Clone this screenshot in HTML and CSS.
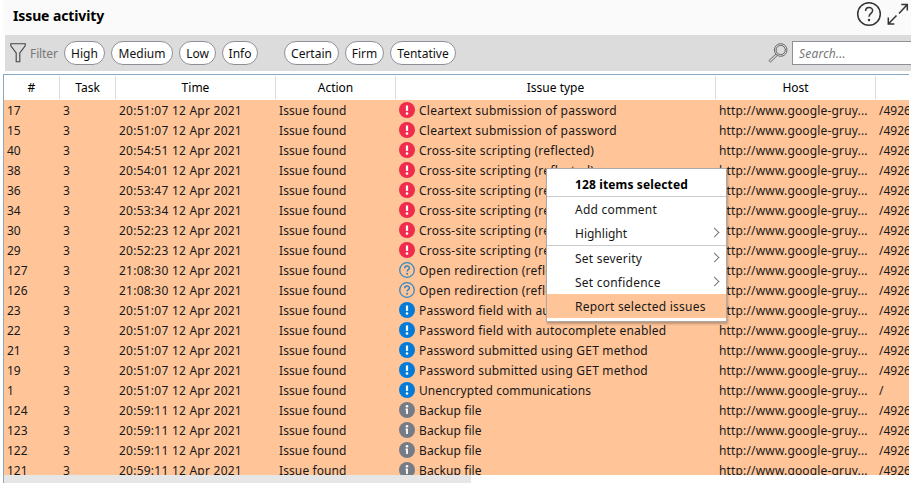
FILE: index.html
```
<!DOCTYPE html>
<html lang="en">
<head>
<meta charset="utf-8">
<title>Issue activity</title>
<link rel="stylesheet" href="styles.css">
</head>
<body>
<svg class="defs" aria-hidden="true">
  <symbol id="high" viewBox="0 0 16 16"><circle cx="8" cy="8" r="8" fill="#f02b4c"/><path d="M8 3.5v5.4" stroke="#fff" stroke-width="2.2"/><circle cx="8" cy="11.5" r="1.3" fill="#fff"/></symbol>
  <symbol id="low" viewBox="0 0 16 16"><circle cx="8" cy="8" r="8" fill="#057bd9"/><path d="M8 3.5v5.4" stroke="#fff" stroke-width="2.2"/><circle cx="8" cy="11.5" r="1.3" fill="#fff"/></symbol>
  <symbol id="tentative" viewBox="0 0 16 16"><circle cx="8" cy="8" r="7.3" fill="none" stroke="#3586c1" stroke-width="1.3"/><path d="M5.7 6.2C5.7 3.2 10.4 3.3 10.4 6c0 1.7-2.3 1.6-2.3 3.5" fill="none" stroke="#3586c1" stroke-width="1.5"/><circle cx="8.1" cy="11.8" r="1" fill="#3586c1"/></symbol>
  <symbol id="info" viewBox="0 0 16 16"><circle cx="8" cy="8" r="8" fill="#757c85"/><circle cx="8" cy="4.3" r="1.3" fill="#fff"/><path d="M6.6 7.3H8V12M8 6.5V12" fill="none" stroke="#fff" stroke-width="1.8"/></symbol>
</svg>
<header class="titlebar">
  <h1>Issue activity</h1>
  <svg class="help" viewBox="0 0 26 26"><circle cx="13" cy="13" r="11.3"/><path d="M9.6 10c0-4.5 7-4.5 7-.5 0 2.9-3.6 3-3.6 6.2"/><circle class="dot" cx="13" cy="19" r="1.2"/></svg>
  <svg class="expand" viewBox="0 0 22 22"><path d="M12 10.5L20.3 1.5M14.3 1.5h6v6M9.5 12.5L1.3 21M1.3 14.6V21h6"/></svg>
</header>
<div class="toolbar">
  <svg class="funnel" viewBox="0 0 16 20"><path d="M.8.8h14.4v2L9.8 10v8.8H6.2V10L.8 2.8z"/></svg>
  <span class="filter">Filter</span>
  <button class="w41">High</button><button class="w62">Medium</button><button class="w37">Low</button><button class="w36">Info</button>
  <button class="w55 second">Certain</button><button class="w39">Firm</button><button class="w66">Tentative</button>
  <svg class="lens" viewBox="0 0 20 20"><circle cx="12.7" cy="7" r="6.3"/><circle cx="12.7" cy="7" r="4.6"/><path d="M8.2 10.8L1 17.5l1.5 1.6 7.2-7"/></svg>
  <div class="search">Search...</div>
</div>
<main class="table">
  <div class="row head"><span>#</span><span>Task</span><span>Time</span><span>Action</span><span>Issue type</span><span>Host</span><span></span></div>
  <div id="rows" class="rows"></div>
  <div class="scroll"><div class="thumb"></div></div>
</main>
<div class="menu">
  <div class="item title">128 items selected</div>
  <div class="group"><div class="item">Add comment</div><div class="item more tight">Highlight</div></div>
  <div class="group"><div class="item more">Set severity</div><div class="item more">Set confidence</div><div class="item active">Report selected issues</div></div>
</div>
<script src="script.js"></script>
</body>
</html>
```
FILE: script.js
```
const clear = 'Cleartext submission of password';
const xss = 'Cross-site scripting (reflected)';
const redirect = 'Open redirection (reflected)';
const auto = 'Password field with autocomplete enabled';
const get = 'Password submitted using GET method';
const issues = [
  [17, '20:51:07', 'high', clear], [15, '20:51:07', 'high', clear],
  [40, '20:54:51', 'high', xss], [38, '20:54:01', 'high', xss],
  [36, '20:53:47', 'high', xss], [34, '20:53:34', 'high', xss],
  [30, '20:52:23', 'high', xss], [29, '20:52:23', 'high', xss],
  [127, '21:08:30', 'tentative', redirect], [126, '21:08:30', 'tentative', redirect],
  [23, '20:51:07', 'low', auto], [22, '20:51:07', 'low', auto],
  [21, '20:51:07', 'low', get], [19, '20:51:07', 'low', get],
  [1, '20:51:07', 'low', 'Unencrypted communications'],
  [124, '20:59:11', 'info', 'Backup file'], [123, '20:59:11', 'info', 'Backup file'],
  [122, '20:59:11', 'info', 'Backup file'], [121, '20:59:11', 'info', 'Backup file']
];
const spacing = { [clear]: 'wide', [xss]: 'wide', [redirect]: 'wide', [auto]: 'medium', [get]: 'medium' };
document.getElementById('rows').innerHTML = issues.map(([id, time, icon, type]) =>
  `<div class="row"><span>${id}</span><span>3</span><span class="time">${time} 12 Apr 2021</span><span class="action">Issue found</span>` +
  `<span class="type ${spacing[type] || 'narrow'}"><svg><use href="#${icon}"/></svg>${type}</span><span class="host">http://www.google-gruy...</span>` +
  `<span>${id === 1 ? '/' : '/4926'}</span></div>`).join('');
```
FILE: styles.css
```
* { box-sizing: border-box; }
body { margin: 0; width: 911px; height: 483px; overflow: hidden; background: #fff; color: #181818; font: 12px "Noto Sans", sans-serif; position: relative; }
.defs { position: absolute; width: 0; height: 0; }
.titlebar { height: 35px; margin-left: 3px; background: #fafafa; display: flex; align-items: flex-start; }
h1 { margin: 0; padding: 6px 0 0 10px; font-size: 14px; line-height: 20px; color: #000; flex: 1; letter-spacing: -.12px; }
.help { width: 26px; height: 26px; margin: 1px 5px 0 0; }
.expand { width: 22px; height: 22px; margin: 3px 2px 0 0; }
.help, .expand { fill: none; stroke: #333; stroke-width: 1.5; }
.help .dot { fill: #333; stroke: none; }
.toolbar { height: 36px; margin-left: 5px; background: #dcdcdc; display: flex; align-items: center; padding-left: 5px; }
.funnel { width: 16px; height: 20px; fill: none; stroke: #444; stroke-width: 1.1; }
.filter { width: 34px; margin-left: 4px; color: #777; letter-spacing: -.1px; }
button { height: 24px; padding: 0; margin-right: 6px; border: 1px solid #8f8f98; border-radius: 12px; background: #fff; color: #111; font: 12px/20px "Noto Sans", sans-serif; padding-top: 2px; }
.w41 { width: 41px; } .w62 { width: 62px; } .w37 { width: 37px; } .w36 { width: 36px; } .w55 { width: 55px; } .w39 { width: 39px; } .w66 { width: 66px; }
.second { margin-left: 20px; }
.lens { width: 20px; height: 20px; margin-left: auto; margin-right: 4px; fill: none; stroke: #666; stroke-width: 1; }
.search { width: 119px; height: 24px; border: 1px solid #8f8f98; border-right: 0; background: #fff; color: #777; font-style: italic; line-height: 23px; padding-left: 6px; letter-spacing: .2px; }
.table { width: 906px; height: 409px; margin: 3px 0 0 3px; border: 1px solid #87a9c6; border-right: 0; border-bottom: 0; overflow: hidden; }
.row { display: grid; grid-template-columns: 56px 56px 160px 120px 320px 160px 33px; height: 20px; line-height: 22px; background: #ffc599; white-space: nowrap; }
.row > span { padding-left: 3px; height: 20px; }
.row > span:last-child { overflow: hidden; }
.row.head { height: 25px; padding: 1px 0; line-height: 24px; background: #fff; text-align: center; color: #000; }
.head > span { padding: 0; }
.row.head > span { padding: 0; height: 23px; border-right: 1px solid #dcdcdc; }
.row.head > span:last-child { border: 0; }
.rows { height: 375px; overflow: hidden; }
.time { letter-spacing: .24px; }
.action { letter-spacing: .1px; }
.host { letter-spacing: .16px; }
.row > .type { display: flex; gap: 4px; }
.type svg { width: 16px; height: 16px; margin-top: 2px; }
.wide { letter-spacing: .25px; }
.medium { letter-spacing: .2px; }
.narrow { letter-spacing: .08px; }
.scroll { height: 8px; background: #fff; }
.thumb { width: 467px; height: 8px; background: #e6e6e6; }
.menu { position: absolute; left: 546px; top: 168px; width: 181px; height: 154px; border: 1px solid #aaa; background: #fff; box-shadow: 1px 2px 2px rgba(0,0,0,.25); }
.item { height: 24px; line-height: 26px; padding-left: 28px; position: relative; letter-spacing: .23px; }
.item.title { height: 27px; line-height: 31px; font-weight: 700; color: #000; letter-spacing: .13px; }
.item.tight { letter-spacing: 0; }
.group { border-top: 1px solid #ccc; }
.active { background: #ffc599; }
.more::after { content: ""; position: absolute; right: 8px; top: 8px; width: 6px; height: 6px; border: solid #777; border-width: 1px 1px 0 0; transform: rotate(45deg); }
```
